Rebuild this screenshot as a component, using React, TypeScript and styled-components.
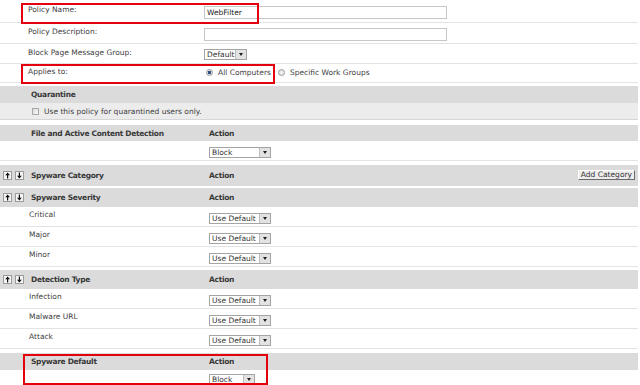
import styled, { createGlobalStyle } from "styled-components";

const GlobalStyle = createGlobalStyle`
  * { box-sizing: border-box; }
  body {
    margin: 0;
    background: #fff;
    font-family: "DejaVu Sans", Verdana, sans-serif;
    font-size: 7.5px;
    color: #404040;
  }
`;

const Page = styled.div`
  position: relative;
  width: 638px;
  height: 385px;
  overflow: hidden;
`;

const FieldRow = styled.div<{ $h: number }>`
  display: grid;
  grid-template-columns: 204px 1fr;
  align-items: center;
  height: ${(p) => p.$h}px;
  border-bottom: 1px solid #e3e3e3;
`;

const FieldLabel = styled.div`
  padding: 0 0 3px 28px;
`;

const TextBox = styled.div`
  width: 243px;
  height: 13px;
  border: 1px solid #c6c6c6;
  padding-left: 2px;
  line-height: 11px;
  color: #222;
  margin-top: 2px;
`;

const Section = styled.div<{ $gap: number }>`
  margin-top: ${(p) => p.$gap}px;
`;

const SectionHead = styled.div<{ $h: number }>`
  display: grid;
  grid-template-columns: 31px 178px 1fr auto;
  align-items: center;
  height: ${(p) => p.$h}px;
  background: #dbdbdb;
  font-weight: bold;
  letter-spacing: -0.3px;
  color: #383838;
  padding-right: 3px;
`;

const MoveButtons = styled.div`
  display: flex;
  gap: 3px;
  padding: 0 0 1px 3px;
`;

const MoveButton = styled.span`
  display: flex;
  width: 9px;
  height: 9px;
  border: 1px solid #9c9c9c;
  background: #f4f4f4;
`;

const AddButton = styled.span`
  font-weight: normal;
  letter-spacing: 0;
  color: #333;
  height: 10px;
  line-height: 8px;
  padding: 0 2px;
  background: #ececec;
  border: 1px solid;
  border-color: #fff #6a6a6a #6a6a6a #fff;
  margin-bottom: 1px;
`;

const QuarantineBody = styled.div`
  display: flex;
  align-items: center;
  gap: 5px;
  height: 17px;
  padding-left: 32px;
  background: #ececec;
  border-bottom: 1px solid #d6d6d6;
`;

const CheckBox = styled.span`
  width: 7px;
  height: 7px;
  border: 1px solid #a8a8a8;
  background: linear-gradient(135deg, #dcdcdc, #f8f8f8);
  margin-top: 1px;
`;

const ItemRow = styled.div`
  display: grid;
  grid-template-columns: 209px auto;
  align-items: start;
  height: 20px;
  border-bottom: 1px solid #e3e3e3;
`;

const ItemLabel = styled.div`
  padding: 3px 0 0 29px;
`;

const Select = styled.div<{ $w: number; $top: number }>`
  display: flex;
  width: ${(p) => p.$w}px;
  height: 11px;
  margin-top: ${(p) => p.$top}px;
  border: 1px solid #a4a4a4;
  background: #fff;
  color: #333;
`;

const SelectText = styled.span`
  flex: 1;
  padding-left: 2px;
  line-height: 9px;
  white-space: nowrap;
`;

const SelectArrow = styled.span`
  display: flex;
  align-items: center;
  justify-content: center;
  width: 11px;
  border-left: 1px solid #bdbdbd;
  background: #e2e2e2;

  &::after {
    content: "";
    border-left: 2.5px solid transparent;
    border-right: 2.5px solid transparent;
    border-top: 3px solid #1e1e1e;
  }
`;

const RadioGroup = styled.div`
  display: flex;
  align-items: center;
  padding: 0 0 1px 2px;
`;

const Radio = styled.span<{ $on?: boolean }>`
  width: 7px;
  height: 7px;
  border-radius: 50%;
  border: 1px solid #9d9d9d;
  background: ${(p) =>
    p.$on
      ? "radial-gradient(circle, #2d4f86 0 1.4px, #dedede 1.8px)"
      : "radial-gradient(circle, #f6f6f6, #d8d8d8)"};
  margin-right: 5px;
`;

const RadioText = styled.span`
  margin-right: 7px;
`;

const Highlight = styled.div<{ $x: number; $y: number; $w: number; $h: number }>`
  position: absolute;
  left: ${(p) => p.$x}px;
  top: ${(p) => p.$y}px;
  width: ${(p) => p.$w}px;
  height: ${(p) => p.$h}px;
  border: 2px solid #e4000c;
  pointer-events: none;
`;

function Arrow({ up }: { up?: boolean }) {
  return (
    <svg width="7" height="7" viewBox="0 0 7 7">
      <g transform={up ? undefined : "rotate(180 3.5 3.5)"} fill="#111">
        <rect x="3" y="2.5" width="1.2" height="4" />
        <polygon points="3.6,0.5 1.2,3.3 6,3.3" />
      </g>
    </svg>
  );
}

function Dropdown({ value, width, top = 6 }: { value: string; width: number; top?: number }) {
  return (
    <Select $w={width} $top={top}>
      <SelectText>{value}</SelectText>
      <SelectArrow />
    </Select>
  );
}

function Head({ title, h, arrows, extra }: { title: string; h: number; arrows?: boolean; extra?: React.ReactNode }) {
  return (
    <SectionHead $h={h}>
      <MoveButtons>
        {arrows && (
          <>
            <MoveButton><Arrow up /></MoveButton>
            <MoveButton><Arrow /></MoveButton>
          </>
        )}
      </MoveButtons>
      <span>{title}</span>
      <span>Action</span>
      {extra ?? <span />}
    </SectionHead>
  );
}

const severities = ["Critical", "Major", "Minor"];
const detections = ["Infection", "Malware URL", "Attack"];

export default function App() {
  return (
    <Page>
      <GlobalStyle />

      <FieldRow $h={23}>
        <FieldLabel>Policy Name:</FieldLabel>
        <TextBox>WebFilter</TextBox>
      </FieldRow>
      <FieldRow $h={21}>
        <FieldLabel>Policy Description:</FieldLabel>
        <TextBox />
      </FieldRow>
      <FieldRow $h={20}>
        <FieldLabel>Block Page Message Group:</FieldLabel>
        <Dropdown value="Default" width={43} top={2} />
      </FieldRow>
      <FieldRow $h={19}>
        <FieldLabel>Applies to:</FieldLabel>
        <RadioGroup>
          <Radio $on />
          <RadioText>All Computers</RadioText>
          <Radio />
          <RadioText>Specific Work Groups</RadioText>
        </RadioGroup>
      </FieldRow>

      <Section $gap={3}>
        <SectionHead $h={17}>
          <span />
          <span>Quarantine</span>
        </SectionHead>
        <QuarantineBody>
          <CheckBox />
          <span>Use this policy for quarantined users only.</span>
        </QuarantineBody>
      </Section>

      <Section $gap={5}>
        <Head title="File and Active Content Detection" h={16} />
        <ItemRow>
          <ItemLabel />
          <Dropdown value="Block" width={62} />
        </ItemRow>
      </Section>

      <Section $gap={4}>
        <Head title="Spyware Category" h={21} arrows extra={<AddButton>Add Category</AddButton>} />
      </Section>

      <Section $gap={2}>
        <Head title="Spyware Severity" h={19} arrows />
        {severities.map((s) => (
          <ItemRow key={s}>
            <ItemLabel>{s}</ItemLabel>
            <Dropdown value="Use Default" width={62} />
          </ItemRow>
        ))}
      </Section>

      <Section $gap={3}>
        <Head title="Detection Type" h={19} arrows />
        {detections.map((d) => (
          <ItemRow key={d}>
            <ItemLabel>{d}</ItemLabel>
            <Dropdown value="Use Default" width={62} />
          </ItemRow>
        ))}
      </Section>

      <Section $gap={4}>
        <Head title="Spyware Default" h={17} />
        <ItemRow>
          <ItemLabel />
          <Dropdown value="Block" width={46} top={4} />
        </ItemRow>
      </Section>

      <Highlight $x={21} $y={3} $w={238} $h={21} />
      <Highlight $x={21} $y={64} $w={254} $h={20} />
      <Highlight $x={23} $y={354} $w={245} $h={31} />
    </Page>
  );
}
